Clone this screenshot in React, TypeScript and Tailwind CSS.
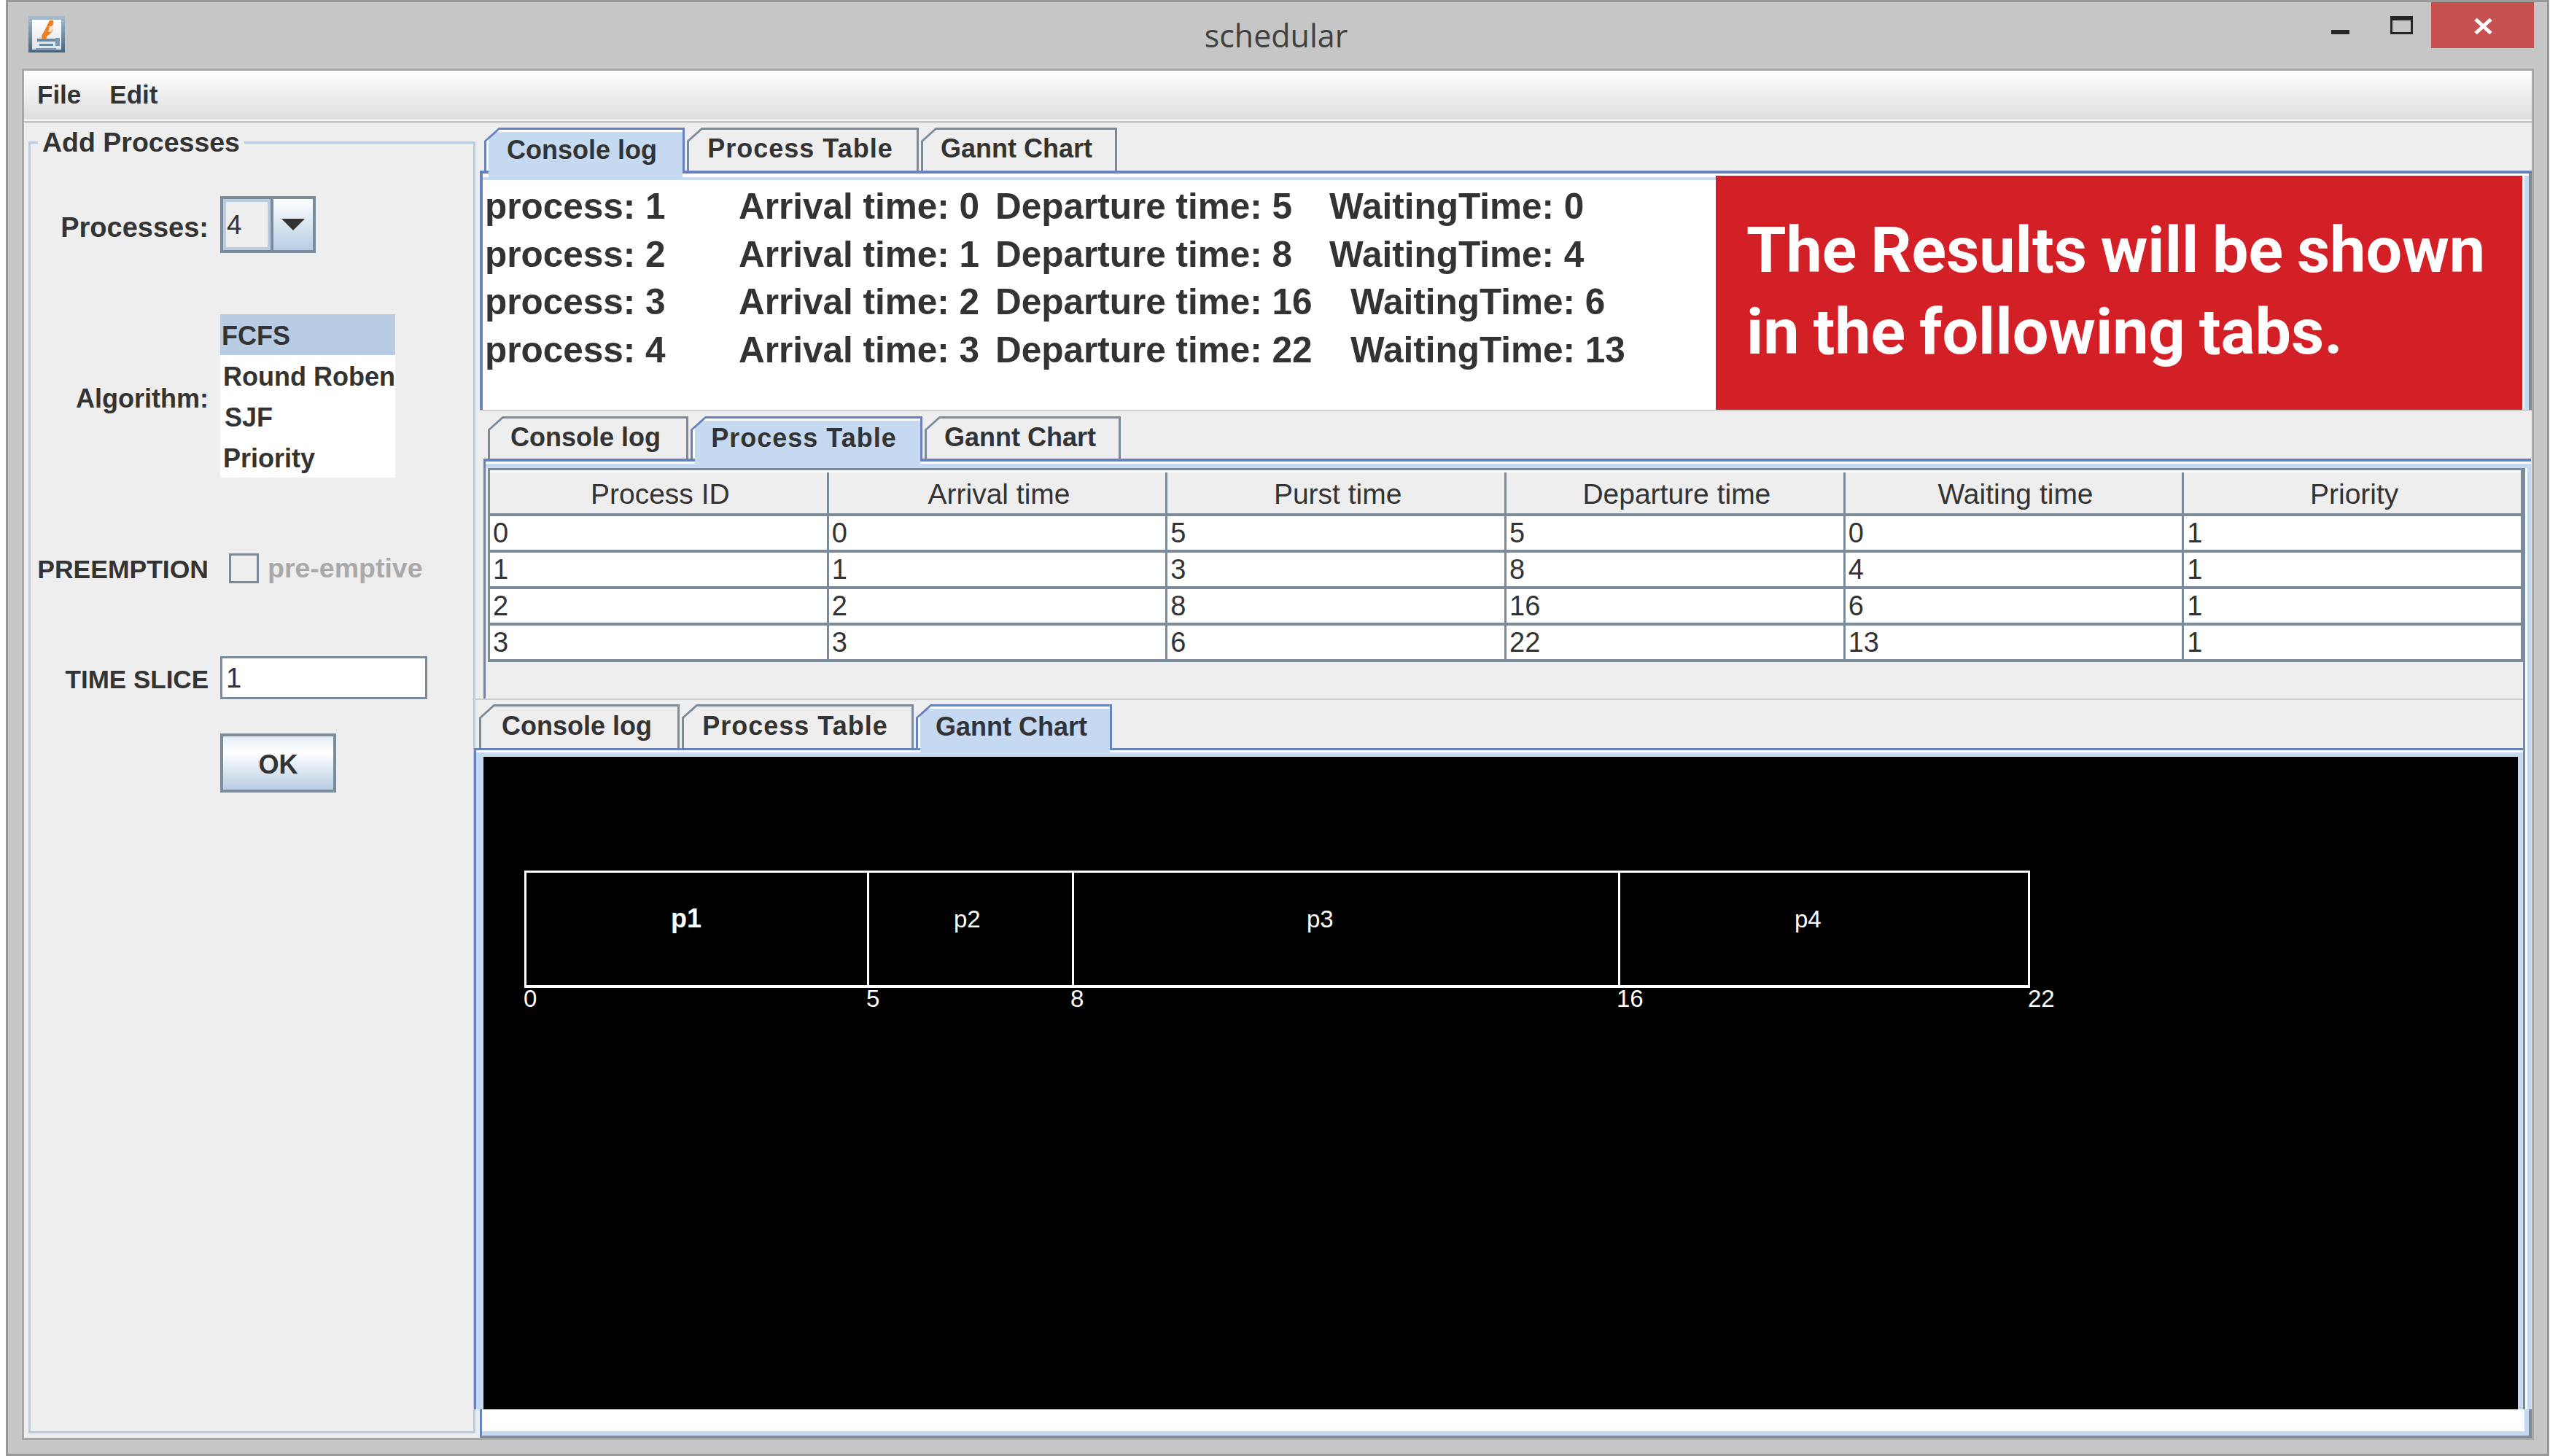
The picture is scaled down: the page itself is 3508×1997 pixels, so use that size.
const tabs = [
  { name: "Console log", width: "w-[275px]", text: "" },
  { name: "Process Table", width: "w-[318px]", text: "tracking-[1px]" },
  { name: "Gannt Chart", width: "w-[269px]", text: "" },
]

const consoleRows = [
  { p: "process: 1", a: "Arrival time: 0", d: "Departure time: 5", dw: "w-[458px]", w: "WaitingTime: 0" },
  { p: "process: 2", a: "Arrival time: 1", d: "Departure time: 8", dw: "w-[458px]", w: "WaitingTime: 4" },
  { p: "process: 3", a: "Arrival time: 2", d: "Departure time: 16", dw: "w-[487px]", w: "WaitingTime: 6" },
  { p: "process: 4", a: "Arrival time: 3", d: "Departure time: 22", dw: "w-[487px]", w: "WaitingTime: 13" },
]

const tableHead = ["Process ID", "Arrival time", "Purst time", "Departure time", "Waiting time", "Priority"]
const tableRows = [
  ["0", "0", "5", "5", "0", "1"],
  ["1", "1", "3", "8", "4", "1"],
  ["2", "2", "8", "16", "6", "1"],
  ["3", "3", "6", "22", "13", "1"],
]

function Tab({ name, width, text, active, tail }: { name: string; width: string; text: string; active: boolean; tail: string }) {
  return (
    <div className={`relative h-full ${width}`}>
      <div className={`h-full [clip-path:polygon(20px_0,100%_0,100%_100%,0_100%,0_18px)] pt-[3px] px-[3px] ${active ? "bg-[#6882c0]" : "bg-[#7c8b9a]"}`}>
        <div className={`h-full [clip-path:polygon(18px_0,100%_0,100%_100%,0_100%,0_16px)] flex items-center justify-center pb-[4px] text-[36px] font-bold leading-none text-[#333] ${text} ${active ? "bg-[#c5d9f0] border-l-[3px] border-t-[3px] border-white pr-[10px]" : "bg-[#eeeeee] pr-[7px]"}`}>
          {name}
        </div>
      </div>
      {active && <div className={`absolute top-full left-[6px] right-[3px] z-10 bg-[#c5d9f0] ${tail}`} />}
    </div>
  )
}

function TabStrip({ active, height, pad, tail }: { active: number; height: string; pad: string; tail: string }) {
  return (
    <div className={`flex gap-[3px] ${height} ${pad}`}>
      {tabs.map((t, i) => (
        <Tab key={t.name} name={t.name} width={t.width} text={t.text} active={i === active} tail={tail} />
      ))}
    </div>
  )
}

function Row({ label, size, className, children }: { label: string; size: string; className: string; children: React.ReactNode }) {
  return (
    <div className={`flex items-center gap-[16px] ${className}`}>
      <div className={`w-[244px] text-right font-bold leading-none text-[#333] whitespace-nowrap ${size}`}>{label}</div>
      {children}
    </div>
  )
}

function JavaIcon() {
  return (
    <svg width="50" height="50" viewBox="0 0 50 50" className="block">
      <defs>
        <linearGradient id="frame" x1="0" y1="0" x2="0" y2="1">
          <stop offset="0" stopColor="#a6bccd" />
          <stop offset="1" stopColor="#456480" />
        </linearGradient>
        <linearGradient id="paper" x1="0" y1="0" x2="0" y2="1">
          <stop offset="0" stopColor="#ffffff" />
          <stop offset="1" stopColor="#dfe3e6" />
        </linearGradient>
      </defs>
      <rect width="50" height="50" fill="url(#frame)" />
      <rect x="5" y="5" width="40" height="41" fill="url(#paper)" />
      <path d="M29 6h5v5l-3 5 3 3-5 6-4 3 -1 5h-5l-1-6 4-7 3-6z" fill="#ee7f22" />
      <path d="M29 14h5v4l-4 4h-3z" fill="#fbe3cb" />
      <rect x="12" y="31" width="27" height="4" fill="#6e8ba6" />
      <rect x="15" y="38" width="19" height="3" fill="#6e8ba6" />
      <rect x="37" y="30" width="6" height="11" fill="#7b98b3" />
      <rect x="10" y="44" width="28" height="3" fill="#7d9ab3" />
    </svg>
  )
}

function GanttChart() {
  return (
    <svg width="2790" height="895" viewBox="0 0 2790 895" className="block bg-black">
      <rect x="57.5" y="157.5" width="2062" height="157" fill="none" stroke="#fff" strokeWidth="3" />
      <rect x="56" y="314" width="2065" height="3" fill="#fff" />
      <rect x="526" y="156" width="3" height="160" fill="#fff" />
      <rect x="807" y="156" width="3" height="160" fill="#fff" />
      <rect x="1556" y="156" width="3" height="160" fill="#fff" />
      <g fill="#fff" fontSize="33">
        <text x="257" y="234" fontWeight="700" fontSize="36">p1</text>
        <text x="645" y="234">p2</text>
        <text x="1129" y="234">p3</text>
        <text x="1798" y="234">p4</text>
        <text x="55" y="343">0</text>
        <text x="525" y="343">5</text>
        <text x="805" y="343">8</text>
        <text x="1554" y="343">16</text>
        <text x="2118" y="343">22</text>
      </g>
    </svg>
  )
}

export default function App() {
  return (
    <div className="w-[3508px] h-[1997px] bg-white overflow-hidden pl-[8px] pr-[12px] font-['Liberation_Sans',Arial,sans-serif] text-[#333]">
      <div className="h-full border-[3px] border-[#999999] bg-[#c6c6c6] flex flex-col">
        {/* title bar */}
        <div className="h-[91px] flex items-start shrink-0">
          <div className="ml-[28px] mt-[19px]">
            <JavaIcon />
          </div>
          <div className="flex-1 text-center pt-[20px] pl-[214px] text-[43px] leading-[52px] text-[#404040] font-['Open_Sans',sans-serif]">schedular</div>
          <div className="flex items-start mr-[18px]">
            <div className="w-[25px] h-[6px] mt-[38px] bg-[#262626]" />
            <div className="w-[31px] h-[25px] ml-[56px] mt-[19px] border-[3px] border-t-[6px] border-[#262626]" />
            <div className="w-[141px] h-[63px] ml-[25px] bg-[#c75050] pl-[59px] pt-[22px]">
              <svg width="25" height="22" viewBox="0 0 25 22" className="block">
                <path d="M2 1.5 L23 20.5 M23 1.5 L2 20.5" stroke="#fff" strokeWidth="5" fill="none" />
              </svg>
            </div>
          </div>
        </div>

        {/* client area */}
        <div className="ml-[19px] mr-[18px] h-[1881px] border-[3px] border-[#a8a8a8] bg-[#eeeeee] flex flex-col">
          <div className="h-[66px] shrink-0 bg-linear-to-b from-white to-[#dedede] flex items-center pb-[2px] pl-[18px] gap-[39px] text-[35px] font-bold leading-none text-[#333]">
            <span>File</span>
            <span>Edit</span>
          </div>
          <div className="h-[6px] shrink-0 border-b-[3px] border-[#cccccc]" />

          <div className="flex-1 min-h-0 flex">
            {/* add processes panel */}
            <div className="w-[620px] shrink-0 pl-[6px] pr-[1px] pt-[4px]">
              <fieldset className="h-[1793px] border-[3px] border-[#b8cde3]">
                <legend className="ml-[10px] px-[6px] text-[37.5px] font-bold leading-[44px] text-[#333]">Add Processes</legend>

                <Row label="Processes:" size="text-[38px] pt-[8px]" className="mt-[52px] h-[78px]">
                  <div className="w-[131px] h-[78px] border-[4px] border-[#7c8b9a] flex">
                    <div className="w-[65px] border-[4px] border-[#b8cde3] flex items-center pl-[1px] text-[37px] leading-none">4</div>
                    <div className="w-[4px] bg-[#7c8b9a]" />
                    <div className="flex-1 bg-linear-to-b from-white to-[#b8cde3] flex items-center justify-center">
                      <svg width="32" height="16" viewBox="0 0 32 16" className="block">
                        <path d="M0 0H32L16 16Z" fill="#333" />
                      </svg>
                    </div>
                  </div>
                </Row>

                <Row label="Algorithm:" size="text-[36px] pt-[8px]" className="mt-[84px] h-[224px]">
                  <ul className="w-[240px] bg-white text-[36px] font-bold leading-[52px] text-[#333]">
                    <li className="bg-[#b8cde3] pl-[2px] pt-[4px]">FCFS</li>
                    <li className="pl-[4px] pt-[4px]">Round Roben</li>
                    <li className="pl-[6px] pt-[4px]">SJF</li>
                    <li className="pl-[4px] pt-[4px]">Priority</li>
                  </ul>
                </Row>

                <Row label="PREEMPTION" size="text-[35.5px] pt-[4px]" className="mt-[104px] h-[41px]">
                  <div className="flex items-center ml-[12px]">
                    <div className="w-[41px] h-[41px] border-[3px] border-[#7c8b9a]" />
                    <span className="ml-[12px] text-[37.5px] font-bold leading-none text-[#a9a9a9]">pre-emptive</span>
                  </div>
                </Row>

                <Row label="TIME SLICE" size="text-[35px] pt-[4px]" className="mt-[100px] h-[59px]">
                  <div className="w-[284px] h-[59px] border-[3px] border-[#7c8b9a] bg-white flex items-center pl-[5px] text-[38px] leading-none">1</div>
                </Row>

                <div className="mt-[47px] ml-[260px] w-[159px] h-[81px] border-[4px] border-[#7c8b9a] bg-linear-to-b from-[#e6edf6] via-white via-[30%] to-[#b8cde3] flex items-center justify-center pt-[4px] text-[36px] font-bold leading-none text-[#333]">
                  OK
                </div>
              </fieldset>
            </div>

            {/* result panes */}
            <div className="flex-1 min-w-0 -ml-[3px] relative z-10 flex flex-col">
              {/* console log pane */}
              <div className="ml-[8px] pt-[6px]">
                <TabStrip active={0} height="h-[59px]" pad="pl-[6px]" tail="h-[13px]" />
                <div className="h-[4px] bg-[#6882c0]" />
                <div className="h-[324px] border-l-[4px] border-[#6882c0] flex bg-white">
                  <div className="flex-1 min-w-0 flex pt-[3px]">
                    <div className="w-[1691px] shrink-0 mt-[2px] pl-[3px] pt-[3px] border-t-[4px] border-[#c5d9f0] text-[49.5px] font-bold leading-[65.5px] text-[#333]">
                      {consoleRows.map((r) => (
                        <div key={r.p} className="flex whitespace-nowrap">
                          <span className="w-[348px]">{r.p}</span>
                          <span className="w-[352px]">{r.a}</span>
                          <span className={r.dw}>{r.d}</span>
                          <span>{r.w}</span>
                        </div>
                      ))}
                    </div>
                    <div className="flex-1 min-w-0 bg-[#d32027] pl-[42px] pt-[46px] text-white font-['Roboto',sans-serif] font-bold text-[88px] leading-[112px] [word-spacing:-3px] whitespace-nowrap">
                      <div>The Results will be shown</div>
                      <div>in the following tabs.</div>
                    </div>
                  </div>
                  <div className="w-[3px] bg-white" />
                  <div className="w-[6px] bg-[#c5d9f0] mt-[3px]" />
                  <div className="w-[4px] bg-[#7c8b9a]" />
                </div>
              </div>
              <div className="ml-[8px] h-[2px] bg-[#d0d0d0]" />

              {/* process table pane head */}
              <div className="ml-[13px] mr-[1px] pt-[7px]">
                <TabStrip active={1} height="h-[58px]" pad="pl-[6px]" tail="h-[13px]" />
                <div className="h-[4px] bg-[#6882c0]" />
                <div className="h-[3px] bg-white border-l-[3px] border-[#6882c0]" />
                <div className="h-[6px] bg-[#c5d9f0] border-l-[3px] border-[#6882c0]" />
              </div>

              <div className="flex h-[1291px] shrink-0 mr-[1px]">
                <div className="flex-1 min-w-0 flex flex-col">
                  {/* process table */}
                  <div className="ml-[13px] h-[316px] border-l-[3px] border-[#6882c0] pl-[3px]">
                    <div className="border-[3px] border-b-0 border-[#7c8b9a]">
                      <div className="flex h-[63px] border-b-[4px] border-[#7c8b9a] border-t-[3px] border-t-white text-[39px] text-[#333]">
                        {tableHead.map((h, i) => (
                          <div key={h} className={`flex-1 flex items-center justify-center pl-[5px] pt-[2px] leading-none ${i < 5 ? "border-r-[3px] border-[#7c8b9a]" : ""}`}>
                            {h}
                          </div>
                        ))}
                      </div>
                      {tableRows.map((row, ri) => (
                        <div key={ri} className="flex h-[50px] bg-white border-b-[4px] border-[#7c8b9a] text-[38px] text-[#333]">
                          {row.map((c, i) => (
                            <div key={i} className={`flex-1 flex items-center pl-[4px] leading-none ${i < 5 ? "border-r-[3px] border-[#7c8b9a]" : ""}`}>
                              {c}
                            </div>
                          ))}
                        </div>
                      ))}
                    </div>
                  </div>
                  <div className="h-[2px] bg-[#cccccc] -ml-[2px]" />

                  {/* gantt pane */}
                  <div className="pt-[6px]">
                    <TabStrip active={2} height="h-[60px]" pad="pl-[7px]" tail="h-[12px]" />
                    <div className="h-[3px] bg-[#6882c0]" />
                    <div className="border-l-[3px] border-[#6882c0]">
                      <div className="h-[3px] bg-white" />
                      <div className="bg-[#c5d9f0] pl-[10px] pr-[6px] pt-[6px]">
                        <GanttChart />
                      </div>
                    </div>
                  </div>
                </div>
                <div className="w-[3px] bg-[#7c8b9a]" />
                <div className="w-[3px] bg-white" />
                <div className="w-[5px] bg-[#c5d9f0]" />
              </div>

              {/* what is left of the pane underneath */}
              <div className="ml-[8px] h-[36px] shrink-0 flex">
                <div className="w-[3px] bg-[#6882c0]" />
                <div className="flex-1 bg-white border-b-[6px] border-[#c5d9f0]" />
                <div className="w-[6px] bg-[#c5d9f0]" />
                <div className="w-[4px] bg-[#7c8b9a]" />
              </div>
              <div className="ml-[8px] h-[3px] shrink-0 bg-[#7c8b9a]" />
            </div>
          </div>
        </div>
      </div>
    </div>
  )
}
